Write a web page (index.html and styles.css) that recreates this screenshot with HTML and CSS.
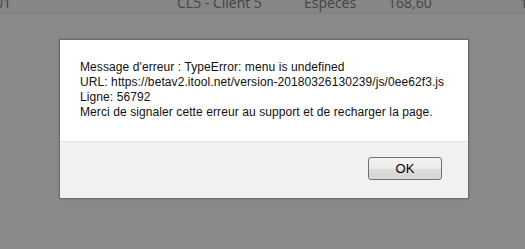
FILE: index.html
```
<!doctype html>
<html lang="fr">
  <head>
    <meta charset="utf-8">
    <title>Erreur</title>
    <link rel="stylesheet" href="styles.css">
  </head>
  <body>
    <div class="grid">
      <div class="row">
        <span class="c-num">01</span>
        <span class="c-client">CL5 - Client 5</span>
        <span class="c-mode">Espèces</span>
        <span class="c-amount">168,60</span>
        <span class="c-last">1</span>
      </div>
    </div>
    <div class="overlay"></div>
    <div class="dialog">
      <div class="dialog-body">
        Message d'erreur : TypeError: menu is undefined<br>
        URL: https://betav2.itool.net/version-20180326130239/js/0ee62f3.js<br>
        Ligne: 56792<br>
        Merci de signaler cette erreur au support et de recharger la page.
      </div>
      <div class="dialog-footer">
        <button class="btn">OK</button>
      </div>
    </div>
  </body>
</html>
```

FILE: styles.css
```
html, body {
    margin: 0;
    height: 100%;
}
body {
    background: #8a8a8a;
    font-family: "Liberation Sans", Arial, sans-serif;
    overflow: hidden;
}

.grid {
    margin-top: -8px;
}
.row {
    display: flex;
    height: 21px;
    align-items: center;
    border-bottom: 1px solid #7e7e7e;
    background: #868686;
    font-family: "Open Sans", sans-serif;
    font-size: 14px;
    color: #3c3c3c;
    white-space: nowrap;
}
.c-num { width: 182px; margin-left: -5px; flex: none; }
.c-client { width: 127px; flex: none; }
.c-mode { width: 84px; flex: none; }
.c-amount { width: 132px; flex: none; }

.overlay {
    position: absolute;
    inset: 0;
    background: rgba(136, 136, 136, 0.1);
}

.dialog {
    position: absolute;
    left: 59px;
    top: 39px;
    width: 408px;
    border: 1px solid #6a6a6a;
    background: #fff;
    box-shadow: 0 0 2px rgba(0, 0, 0, 0.2);
}
.dialog-body {
    padding: 20px 20px 21px 20px;
    font-size: 12px;
    line-height: 15px;
    letter-spacing: 0.09px;
    color: #111;
}
.dialog-footer {
    display: flex;
    justify-content: flex-end;
    background: #f1f1f1;
    border-top: 1px solid #e3e3e3;
    padding: 15px 26px 18px 0;
}
.btn {
    width: 74px;
    height: 23px;
    border: 1px solid #707070;
    border-radius: 3px;
    background: linear-gradient(#f3f3f3, #ebebeb 50%, #dddddd 51%, #d6d6d6);
    font-family: "Liberation Sans", Arial, sans-serif;
    font-size: 13px;
    color: #000;
    padding: 0;
}
```
